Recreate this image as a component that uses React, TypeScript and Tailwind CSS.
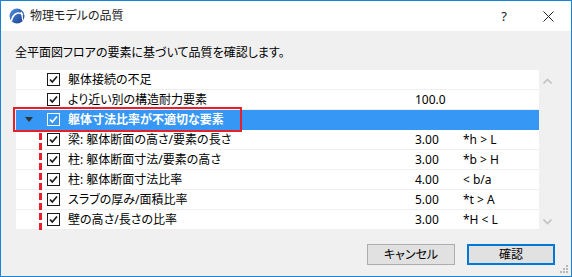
import React from 'react';

type Row = {
  label: string;
  value?: string;
  rule?: string;
  group?: boolean;
};

const rows: Row[] = [
  { label: '躯体接続の不足' },
  { label: 'より近い別の構造耐力要素', value: '100.0' },
  { label: '躯体寸法比率が不適切な要素', group: true },
  { label: '梁: 躯体断面の高さ/要素の長さ', value: '3.00', rule: '*h > L' },
  { label: '柱: 躯体断面寸法/要素の高さ', value: '3.00', rule: '*b > H' },
  { label: '柱: 躯体断面寸法比率', value: '4.00', rule: '< b/a' },
  { label: 'スラブの厚み/面積比率', value: '5.00', rule: '*t > A' },
  { label: '壁の高さ/長さの比率', value: '3.00', rule: '*H < L' },
];

const CheckBox: React.FC<{ light?: boolean }> = ({ light }) => {
  const c = light ? '#ffffff' : '#1a1a1a';
  return (
    <svg width="13" height="13" viewBox="0 0 13 13" className="flex-shrink-0">
      <rect x="0.5" y="0.5" width="12" height="12" fill="none" stroke={c} />
      <path d="M3 6.5L5.3 9L10 3.5" fill="none" stroke={c} strokeWidth="1.7" />
    </svg>
  );
};

const AppIcon: React.FC = () => (
  <svg width="16" height="16" viewBox="0 0 16 16">
    <defs>
      <linearGradient id="ac" x1="0" y1="0" x2="1" y2="1">
        <stop offset="0" stopColor="#4f8fe0" />
        <stop offset="1" stopColor="#1b3f8f" />
      </linearGradient>
    </defs>
    <circle cx="8" cy="8" r="7.5" fill="url(#ac)" />
    <path d="M2.5 12.5C4 6 9 3 13.5 6.5" fill="none" stroke="#ffffff" strokeWidth="1.6" strokeLinecap="round" />
    <path d="M12.5 4.5L13.8 12" fill="none" stroke="#ffffff" strokeWidth="1.3" strokeLinecap="round" />
  </svg>
);

export default function App() {
  return (
    <div className="w-[572px] h-[277px] border border-[#1883d7] bg-[#f0f0f0] flex flex-col text-black font-['Noto_Sans','Noto_Sans_CJK_JP',sans-serif] [font-feature-settings:'palt'] text-[12px] leading-none select-none">
      {/* Title bar */}
      <div className="h-[30px] bg-white flex items-center flex-shrink-0">
        <div className="ml-[8px] mr-[5px]">
          <AppIcon />
        </div>
        <span className="text-[12px] text-[#222]">物理モデルの品質</span>
        <div className="flex-1" />
        <span className="text-[13px] mr-[36px] text-[#222]">?</span>
        <svg width="11" height="11" viewBox="0 0 11 11" className="mr-[17px]">
          <path d="M0.5 0.5L10.5 10.5M10.5 0.5L0.5 10.5" stroke="#222" strokeWidth="1" />
        </svg>
      </div>

      {/* Body */}
      <div className="flex-1 flex flex-col pl-[14px]">
        <div className="h-[39px] flex items-center pt-[4px]">全平面図フロアの要素に基づいて品質を確認します。</div>

        <div className="flex">
          {/* List */}
          <div className="relative w-[523px] bg-white ml-[1px]">
            {rows.map((r, i) => (
              <div
                key={i}
                className={
                  r.group
                    ? 'h-[20px] flex items-center bg-[#3797f5] text-white font-bold border-b border-[#3797f5]'
                    : 'h-[20px] flex items-center border-b border-[#efefef]'
                }
              >
                <div className="w-[31px] pl-[9px] flex items-center">
                  {r.group && (
                    <svg width="8" height="5" viewBox="0 0 8 5">
                      <path d="M0 0H8L4 5Z" fill="#333" />
                    </svg>
                  )}
                </div>
                <CheckBox light={r.group} />
                <span className="ml-[8px] w-[347px]">{r.label}</span>
                <span className="w-[48px]">{r.value}</span>
                <span>{r.rule}</span>
              </div>
            ))}

            {/* Annotation overlays */}
            <div className="absolute left-[-3px] top-[37px] w-[229px] h-[25px] border-2 border-[#e8202a]" />
            <div className="absolute left-[23px] top-[63px] w-[3px] h-[100px] bg-[repeating-linear-gradient(to_bottom,#e8202a_0px,#e8202a_7px,transparent_7px,transparent_10px)]" />
          </div>

          {/* Scrollbar */}
          <div className="w-[17px] flex flex-col items-center justify-between pt-[8px] pb-[5px]">
            <svg width="9" height="6" viewBox="0 0 9 6">
              <path d="M0.5 5.5L4.5 1.5L8.5 5.5" fill="none" stroke="#c2c2c2" strokeWidth="1.6" />
            </svg>
            <svg width="9" height="6" viewBox="0 0 9 6">
              <path d="M0.5 0.5L4.5 4.5L8.5 0.5" fill="none" stroke="#c2c2c2" strokeWidth="1.6" />
            </svg>
          </div>
        </div>

        {/* Buttons */}
        <div className="flex justify-end mt-[14px] pr-[16px] gap-[12px]">
          <button className="w-[88px] h-[21px] bg-[#e1e1e1] border border-[#adadad] flex items-center justify-center">
            キャンセル
          </button>
          <button className="w-[88px] h-[21px] bg-[#e1e1e1] border-2 border-[#0078d7] flex items-center justify-center">
            確認
          </button>
        </div>
      </div>

      {/* Resize grip */}
      <div className="relative">
        <svg width="8" height="8" viewBox="0 0 8 8" className="absolute right-[3px] bottom-[3px]">
          <rect x="6" y="0" width="2" height="2" fill="#b8b8b8" />
          <rect x="3" y="3" width="2" height="2" fill="#b8b8b8" />
          <rect x="6" y="3" width="2" height="2" fill="#b8b8b8" />
          <rect x="0" y="6" width="2" height="2" fill="#b8b8b8" />
          <rect x="3" y="6" width="2" height="2" fill="#b8b8b8" />
          <rect x="6" y="6" width="2" height="2" fill="#b8b8b8" />
        </svg>
      </div>
    </div>
  );
}
